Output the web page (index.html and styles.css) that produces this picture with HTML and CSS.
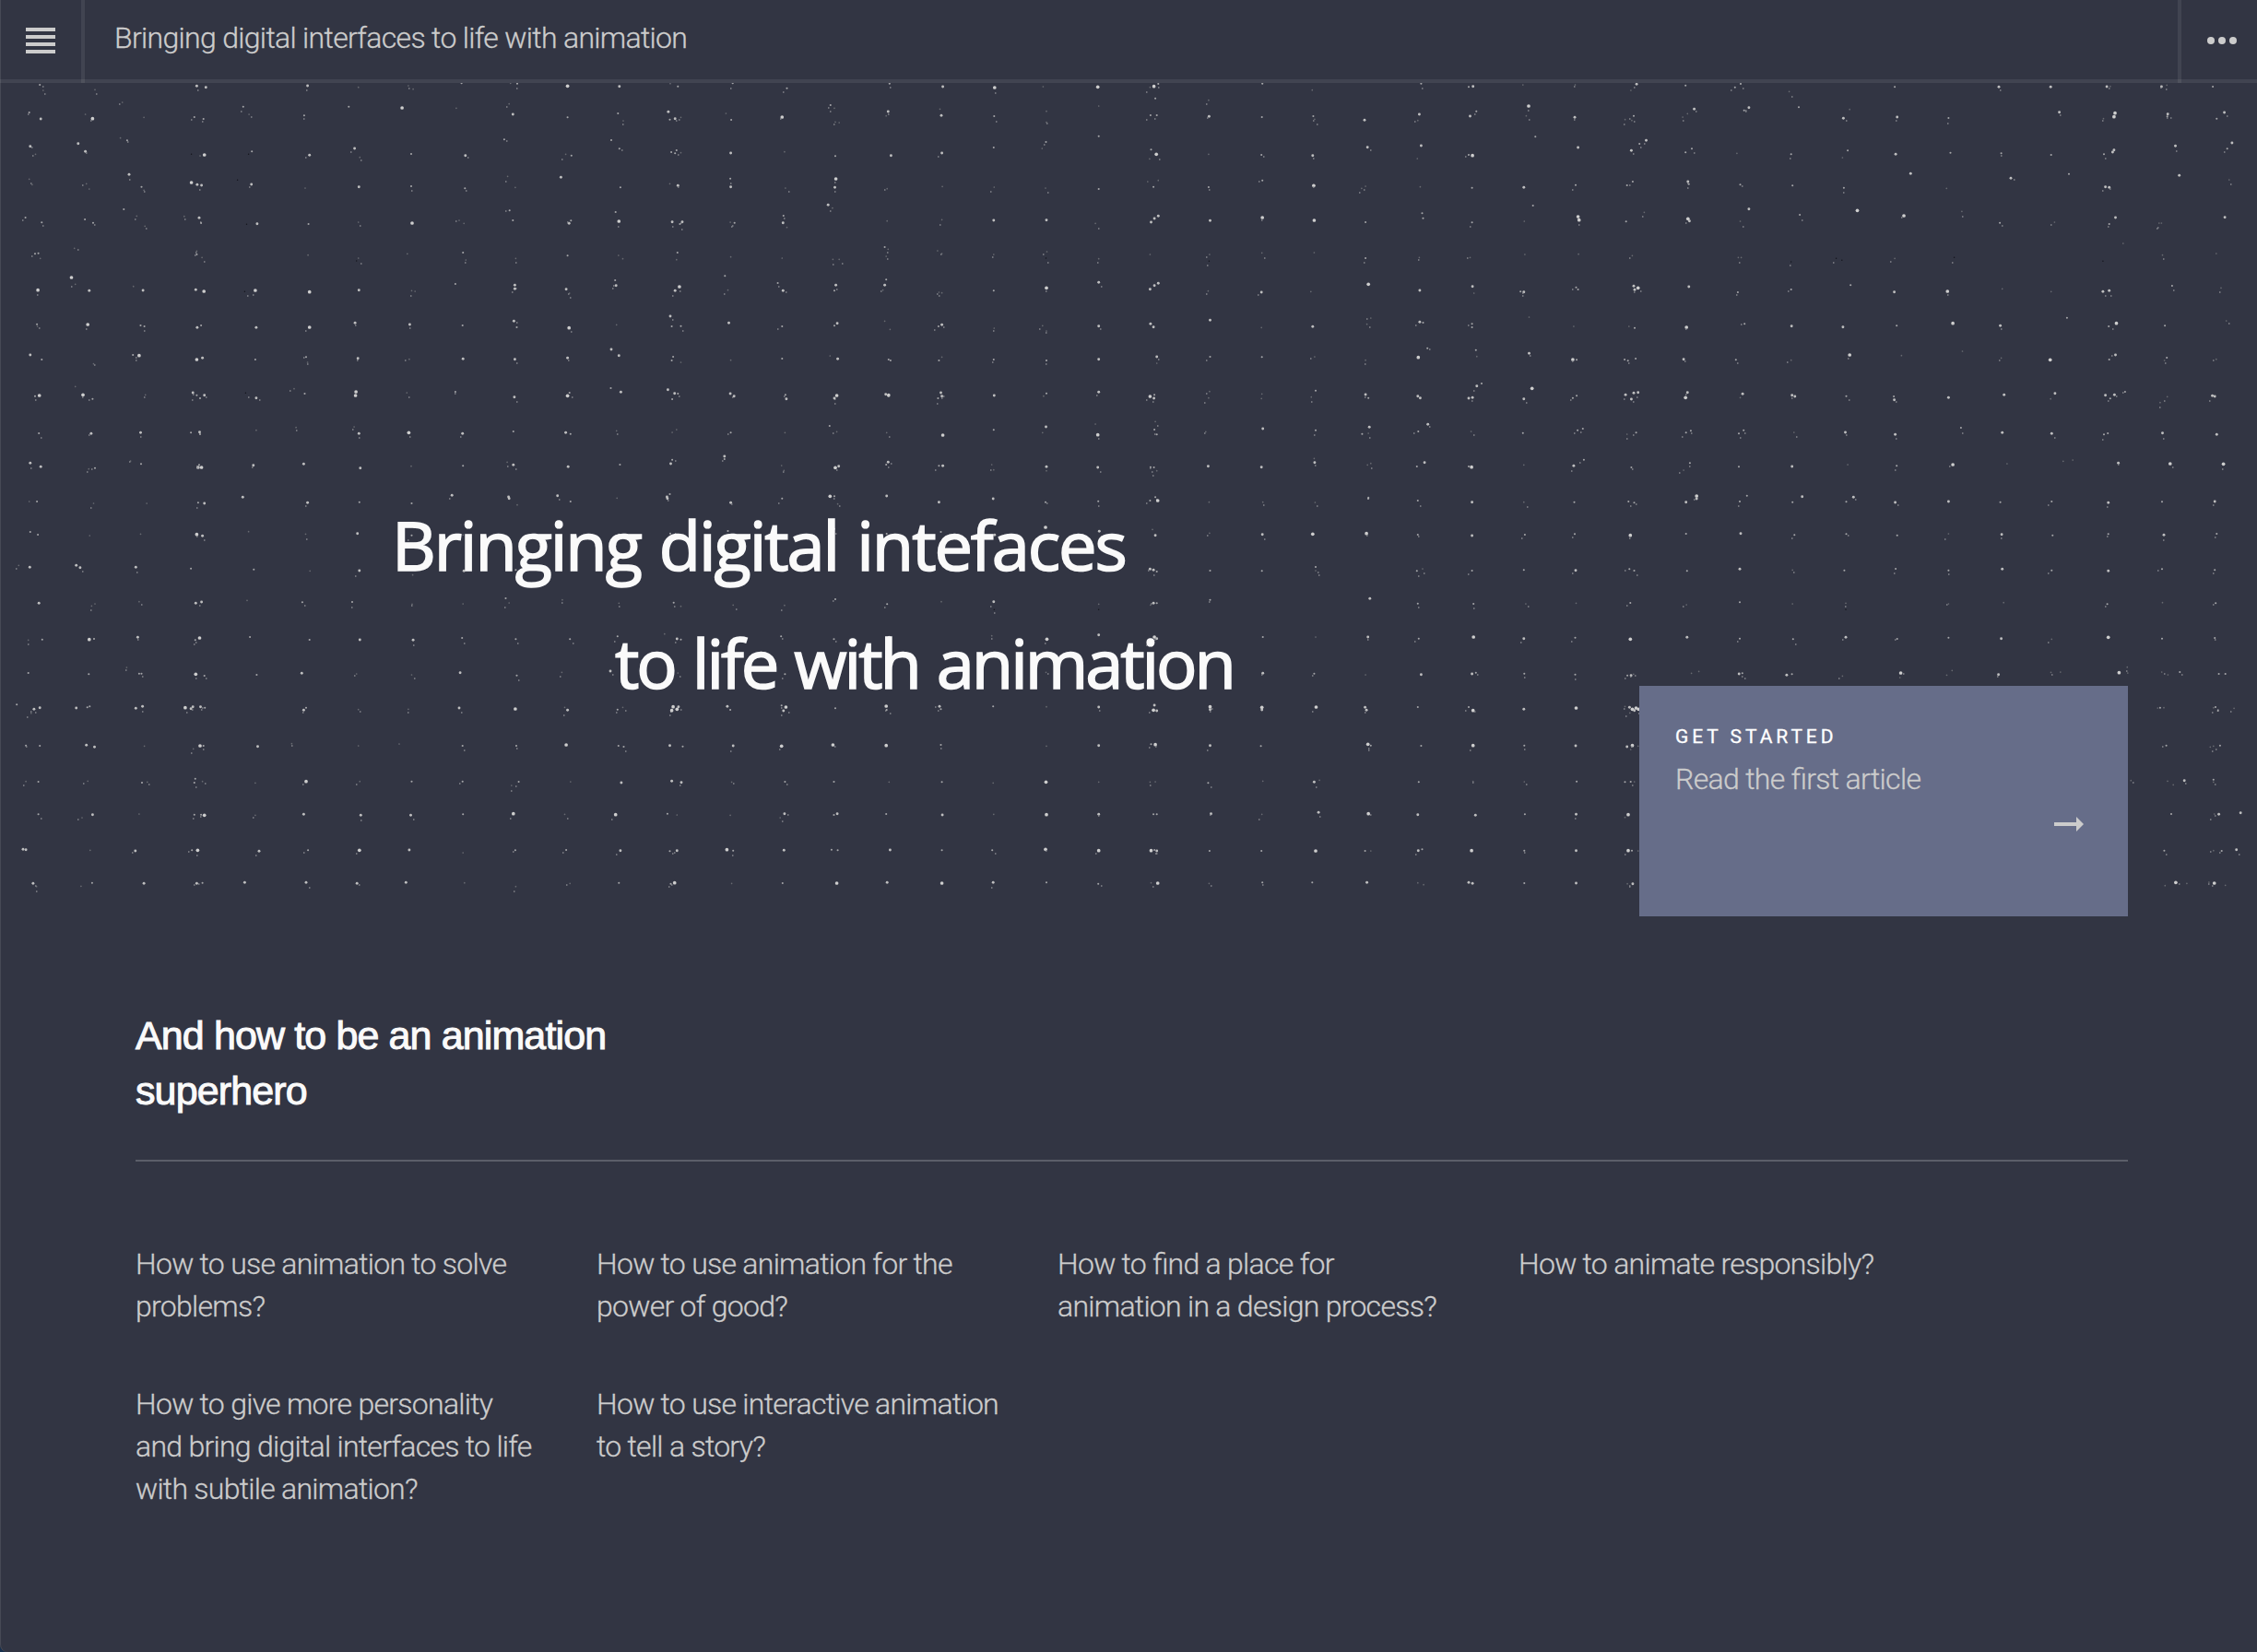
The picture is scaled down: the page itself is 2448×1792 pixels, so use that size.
FILE: index.html
```
<!DOCTYPE html>
<html lang="en">
<head>
<meta charset="utf-8">
<title>Bringing digital interfaces to life with animation</title>
<link rel="stylesheet" href="styles.css">
</head>
<body>
<div class="page">
  <header class="topbar">
    <button class="topbar-button menu" aria-label="Menu">
      <svg width="32" height="28" viewBox="0 0 32 28"><path d="M0 0h32v4H0zM0 8h32v4H0zM0 16h32v4H0zM0 24h32v4H0z"/></svg>
    </button>
    <div class="topbar-title">Bringing digital interfaces to life with animation</div>
    <button class="topbar-button more" aria-label="More">
      <svg width="32" height="8" viewBox="0 0 32 8"><circle cx="4" cy="4" r="4"/><circle cx="16" cy="4" r="4"/><circle cx="28" cy="4" r="4"/></svg>
    </button>
  </header>
  <section class="hero">
    <svg class="stars" id="stars" width="2448" height="904" viewBox="0 90 2448 904"></svg>
    <h1 class="hero-title"><span>Bringing digital intefaces</span><span class="indent">to life with animation</span></h1>
    <a class="card">
      <span class="card-label">GET STARTED</span>
      <span class="card-text">Read the first article</span>
      <svg class="card-arrow" width="32" height="16" viewBox="0 0 32 16"><path d="M0 6h24V0l8 8-8 8v-6H0z"/></svg>
    </a>
  </section>
  <main class="content">
    <h2 class="subtitle">And how to be an animation superhero</h2>
    <ul class="articles">
      <li>How to use animation to solve problems?</li>
      <li>How to use animation for the power of good?</li>
      <li>How to find a place for animation in a design process?</li>
      <li>How to animate responsibly?</li>
      <li>How to give more personality and bring digital interfaces to life with subtile animation?</li>
      <li>How to use interactive animation to tell a story?</li>
    </ul>
  </main>
</div>
<script src="stars.js"></script>
</body>
</html>
```
FILE: styles.css
```
* { box-sizing: border-box; }
body {
  margin: 0;
  background: #17304f;
  font-family: Roboto, "Liberation Sans", sans-serif;
  font-weight: 300;
  font-size: 32px;
  line-height: 46px;
  letter-spacing: -.68px;
  font-feature-settings: "liga" 1;
  -webkit-text-stroke: .3px;
  color: #ccc;
}
.page {
  width: 2448px;
  height: 1792px;
  overflow: hidden;
  background: #323543;
  box-shadow: inset 1px 0 #464955;
  border-bottom-left-radius: 8px;
}
.topbar {
  display: flex;
  height: 90px;
  border-bottom: 4px solid rgba(204, 204, 204, .1);
}
.topbar-button {
  display: flex;
  align-items: center;
  height: 90px;
  margin: 0;
  padding: 0 0 2px;
  border: 0 solid rgba(204, 204, 204, .1);
  background: none;
}
.topbar svg, .card svg { display: block; fill: #ccc; }
.menu { width: 92px; padding-left: 28px; border-right-width: 4px; }
.more { width: 86px; padding-left: 28px; border-left-width: 4px; }
.topbar-title { flex: 1; padding: 18px 0 0 32px; }
.hero {
  position: relative;
  display: flex;
  justify-content: space-between;
  height: 904px;
  padding: 0 140px 0 425px;
}
.stars { position: absolute; left: 0; top: 0; }
.hero-title {
  position: relative;
  display: flex;
  flex-direction: column;
  margin: 437px 0 0;
  font: 500 74px/128px "Open Sans", sans-serif;
  letter-spacing: -2.1px;
  word-spacing: 3px;
  -webkit-text-stroke: 1.6px #fafafa;
  color: #fafafa;
  white-space: nowrap;
}
.indent { padding-left: 242px; letter-spacing: -3.1px; }
.card {
  position: relative;
  align-self: flex-end;
  display: flex;
  flex-direction: column;
  width: 530px;
  height: 250px;
  padding: 32px 48px 0 39px;
  background: #666d89;
}
.card-label {
  font-size: 21px;
  line-height: 46px;
  font-weight: 400;
  letter-spacing: 3.95px;
  color: #fff;
}
.card-arrow { align-self: flex-end; margin-top: 18px; }
.content { padding: 99px 140px 0 147px; }
.subtitle {
  margin: 0;
  padding: 0 1600px 45px 0;
  border-bottom: 2px solid #5b5e69;
  font: 400 43px/60px "Liberation Sans", sans-serif;
  letter-spacing: -.88px;
  -webkit-text-stroke: 1px #fafafa;
  color: #fafafa;
}
.articles {
  display: grid;
  grid-template-columns: repeat(4, 440px);
  gap: 60px;
  margin: 88px 0 0;
  padding: 0;
  list-style: none;
  letter-spacing: -.73px;
}
```
FILE: stars.js
```
// Star positions by sky tile: x,y,magnitude in tile units.
const SX = 816 / 1568, SY = 1 / 3;
const tiles = [
  [0, 80, SX, `83,36,2 90,54,1 198,52,1 410,40,3 429,44,3 641,39,3 747,44,1 851,39,1 861,50,1 962,31,2 1078,32,2 1064,31,1 1183,40,4 1291,41,3 1397,32,1 1413,41,2 1527,31,2 255,93,1 507,107,2 727,107,2 838,111,4 951,112,1 1061,98,1
  61,126,2 85,147,3 193,146,4 178,132,1 300,142,1 405,141,2 424,147,2 634,136,2 519,132,1 1069,132,3 1183,142,2 1288,129,2 1299,153,1 1393,124,3 1407,146,3 1396,149,2 1419,142,1 1524,150,2 1513,129,1
  63,236,3 74,262,1 163,227,3 178,253,3 265,217,2 251,209,1 399,262,0 426,264,4 417,267,1 525,253,2 518,262,0 645,265,3 739,243,3 750,272,1 857,261,2 970,266,3 1051,214,2 1179,262,1 1191,266,2 1274,216,2 1291,244,2 1399,255,2 1410,249,2 1407,259,2 1419,257,1 1523,258,3
  61,343,1 67,361,1 180,358,1 186,375,1 269,328,3 295,368,2 300,379,1 399,354,4 411,361,3 420,363,3 495,346,0 524,360,3 636,372,1 748,368,3 857,366,2 969,373,2 1058,334,1 1074,370,1 1169,337,3 1293,370,2 1396,358,1 1413,364,3 1522,341,2 1523,368,3
  53,468,2 87,484,2 177,474,2 194,485,2 258,441,2 285,463,1 302,496,1 384,464,1 415,469,3 419,486,2 514,490,0 536,488,3 643,489,2 747,483,1 859,486,4 967,487,1 957,477,1 1062,445,2 1069,477,2 1186,487,3 1190,478,2 1283,450,2 1290,480,4 1401,482,3 1422,482,3 1417,489,2 1522,483,1 1531,485,2
  73,586,2 80,584,2 84,601,1 155,568,1 410,588,2 410,577,1 421,598,1 642,590,1 747,600,1 743,609,0 849,586,1 965,582,2 971,606,1 1075,601,1 1183,592,2 1289,591,1 1298,602,1 1412,582,2 1410,605,1 1523,596,1
  79,704,4 149,663,4 157,685,1 186,706,3 298,705,3 278,692,1 408,703,3 425,708,4 532,705,4 510,709,0 645,710,4 748,704,3 858,706,1 865,708,1 949,684,2 1073,688,3 1073,700,3 1180,701,3 1187,714,1 1282,672,2 1284,689,3 1416,693,4 1407,706,3 1511,658,2 1517,704,1
  77,815,2 78,822,1 183,816,4 293,819,2 301,822,2 411,826,3 419,819,2 534,826,3 645,825,4 740,811,3 854,816,3 964,819,2 1071,805,3 1077,825,2 1186,827,4 1285,817,1 1397,789,3 1400,822,2 1419,821,2 1519,811,3
  63,915,3 87,930,2 195,944,1 277,915,2 290,917,4 410,930,4 422,925,3 532,930,2 638,922,2 641,939,1 746,926,3 853,929,1 965,928,3 1073,929,3 1183,925,3 1274,897,3 1290,917,3 1403,921,2 1400,933,2 1419,939,1 1523,932,1
  73,1049,2 82,1047,4 157,1018,1 173,1045,4 193,1058,2 303,1045,1 402,1038,3 410,1046,2 417,1056,2 426,1046,3 512,1039,0 534,1055,3 635,1041,2 613,1025,1 742,1035,4 741,1047,4 848,1038,1 949,1035,2 1072,1052,3 1183,1048,4 1187,1038,2 1273,1023,2 1294,1036,3 1392,1028,3 1406,1040,3 1413,1041,2 1401,1059,2 1522,1041,3 1530,1049,3
  81,1170,2 190,1171,3 293,1168,3 398,1168,2 416,1166,3 417,1173,2 534,1160,1 617,1151,1 748,1171,3 738,1149,1 852,1168,4 964,1171,3 1070,1164,2 1179,1168,3 1189,1172,2 1285,1162,1 1410,1158,1 1401,1167,1 1523,1168,2
  63,1267,3 85,1279,3 185,1286,1 198,1283,2 272,1260,1 294,1270,2 413,1281,4 420,1281,4 415,1273,2 528,1274,3 633,1270,3 751,1283,3 857,1277,1 965,1276,2 1070,1273,3 1057,1264,1 1184,1279,3 1292,1272,2 1398,1269,3 1401,1256,2 1510,1245,3 1510,1254,2 506,1378,3 942,1372,3 1060,1377,3 1162,1373,3 1396,1368,2 1390,1377,3`],
  [816, 80, SX, `72,47,2 286,32,2 397,42,3 505,45,4 606,42,1 720,43,4 837,41,4 846,33,2 829,44,1 1063,32,2 1167,53,1 1394,32,2 1493,43,2 1502,41,3 163,102,2 171,112,1 722,105,1 840,80,2 951,86,1
  62,141,4 173,157,1 181,159,1 283,123,3 279,137,1 394,136,3 391,115,1 504,138,2 613,122,1 613,158,1 830,135,2 843,135,2 952,139,3 1062,141,2 1169,138,2 1172,148,1 1276,151,3 1390,132,3 1387,152,1 1496,138,3 1509,122,2
  67,254,1 173,268,2 289,266,3 395,258,3 503,240,2 612,222,2 604,243,1 722,203,2 831,247,2 842,262,4 828,277,1 951,262,1 1061,264,2 1168,266,3 1282,239,3 1394,234,3 1386,276,1 1493,264,2 1501,266,4
  69,372,1 174,342,4 172,370,3 281,374,1 396,367,1 504,369,1 611,372,1 722,375,2 824,351,1 836,368,2 846,347,1 951,369,2 1063,347,2 1170,364,4 1278,366,1 1270,373,1 1392,368,1 1500,371,2
  158,427,3 167,437,1 65,462,2 64,485,3 72,500,1 281,479,1 395,475,1 503,477,3 613,476,3 715,487,1 831,483,3 838,471,3 846,463,3 954,478,3 1063,468,4 1171,477,4 1278,483,2 1396,454,2 1398,470,2 1500,484,2
  62,600,1 168,604,1 181,604,1 276,564,2 283,571,1 279,594,1 386,576,1 395,585,1 503,588,1 614,579,1 612,600,0 722,602,1 829,588,1 953,588,1 952,610,0 1062,583,1 1171,582,1 1278,600,2 1390,598,1 1496,598,1
  53,681,2 64,706,3 174,688,3 171,706,2 276,688,3 279,670,2 272,704,1 389,711,1 395,713,1 503,706,2 613,697,4 722,679,3 846,682,3 838,689,3 829,701,3 950,707,1 1061,711,3 1164,709,1 1284,685,4 1391,705,3 1501,692,3 1504,714,1
  62,822,2 177,812,3 171,820,2 276,805,1 287,832,1 395,817,3 388,822,2 504,828,1 605,820,1 613,837,1 722,821,3 830,814,3 836,824,3 954,802,3 1061,826,1 1168,823,3 1281,815,1 1289,795,1 1391,808,3 1398,810,2 1500,814,2 1500,825,2
  62,927,2 162,918,1 178,928,3 284,930,2 288,933,2 395,922,1 389,933,2 503,930,2 613,933,2 722,929,3 843,921,3 843,942,1 954,921,2 1062,922,2 1172,921,1 1278,932,1 1388,923,4 1407,893,2 1508,899,2 1510,920,1
  69,1045,2 71,1058,3 176,1047,4 171,1056,3 278,1043,3 284,1046,4 393,1038,3 395,1049,3 387,1056,2 504,1047,3 613,1040,2 607,1049,1 722,1036,3 829,1050,4 837,1056,3 838,1045,2 953,1034,1 951,1055,1 1062,1042,1 1061,1057,1 1174,1031,2 1165,1052,1 1278,1044,3 1284,1055,2 1387,1049,3 1392,1055,3 1510,1016,3 1520,1008,2 1493,1056,3 1501,1054,3
  68,1168,1 161,1146,2 176,1165,1 280,1168,1 397,1176,4 503,1159,2 612,1149,3 605,1168,1 720,1175,4 715,1140,1 838,1158,2 843,1174,2 840,1132,1 945,1165,1 1064,1155,3 1174,1160,2 1286,1150,3 1271,1172,2 1284,1170,1 1408,1141,3 1388,1164,2 1498,1164,1
  61,1275,1 66,1291,1 173,1282,4 180,1277,3 283,1264,3 279,1272,2 397,1276,3 389,1276,2 499,1272,1 503,1289,1 613,1279,3 613,1292,1 720,1281,3 830,1280,2 837,1281,2 843,1292,1 950,1277,3 1061,1280,3 1172,1265,3 1171,1252,1 1282,1273,1 1289,1268,1 1401,1265,3 1385,1278,2 1499,1280,4 1493,1278,2 162,1375,4 171,1375,2 280,1374,3 840,1378,2 1284,1379,2`],
  [1632, 80, SX, `38,36,1 147,36,1 275,34,3 263,54,1 377,38,2 480,44,2 492,33,2 593,58,1 813,43,2 1030,43,3 1138,43,3 1255,42,3 1262,41,1 1369,42,3 1380,37,1 1476,42,2
  50,105,4 45,137,1 146,142,3 269,137,2 251,149,1 265,152,1 395,115,3 381,130,1 371,141,1 509,110,3 499,119,2 613,109,2 706,145,3 719,116,1 818,141,3 925,144,2 1156,125,3 1272,128,4 1270,140,4 1248,146,1 1382,131,3 1381,139,2 1500,126,3 1484,146,2
  64,205,2 153,240,3 295,217,3 281,228,2 264,250,3 377,256,2 390,244,2 484,259,1 597,262,2 715,250,2 704,273,1 815,262,3 929,257,2 1035,259,2 1139,264,2 1270,248,3 1267,255,3 1249,262,2 1398,235,3 1516,225,3 1506,244,2
  40,370,3 148,362,2 267,351,2 255,363,2 382,351,3 384,359,2 491,361,2 600,364,2 707,371,2 846,325,3 921,373,1 1055,340,3 1176,326,2 1252,368,3 1260,370,3 1406,331,3 1510,345,1
  59,429,2 41,480,1 153,465,4 155,476,4 253,481,2 291,451,1 382,472,4 385,479,3 509,440,3 491,480,1 615,459,2 735,445,4 832,462,4 953,448,1 1032,485,2 1146,483,1 1273,468,3 1260,489,2 1364,486,1 1369,486,1 1501,467,3
  42,588,1 154,587,1 266,592,1 487,598,1 493,598,1 597,612,0 691,601,0 703,607,0 813,601,1 937,598,0 1247,610,0 1289,552,1 1371,590,1 1483,585,1
  40,710,3 33,709,2 149,695,2 153,702,2 269,691,3 278,697,4 271,703,3 384,693,3 486,711,2 597,702,2 721,688,2 812,710,3 923,708,4 1037,700,1 1139,709,1 1247,709,3 1260,706,3 1391,690,2 1493,697,1
  51,792,1 144,822,1 259,822,1 271,827,2 379,825,4 500,814,2 598,821,3 705,824,3 817,820,2 934,812,4 1033,820,3 1172,794,2 1275,812,4 1259,822,2 1376,820,2 1504,804,1
  51,910,3 142,930,4 150,931,2 257,934,2 250,930,2 273,927,2 373,929,3 482,931,2 597,932,1 719,915,4 827,917,1 954,903,1 1035,925,1 1137,931,4 1273,915,3 1260,930,2 1380,924,2 1375,933,1 1483,929,1
  57,1024,4 40,1058,3 150,1048,2 142,1055,2 278,1037,3 252,1045,3 269,1039,3 264,1059,3 381,1037,3 377,1054,4 496,1042,3 491,1054,1 599,1046,3 605,1050,3 712,1049,2 811,1050,2 812,1061,3 925,1054,3 1041,1045,3 1147,1040,3 1138,1058,1 1252,1046,3 1271,1045,3 1262,1057,2 1293,1035,2 1381,1051,1 1366,1070,1 1475,1048,3 1480,1050,3
  38,1169,2 152,1160,2 163,1155,2 274,1168,2 255,1173,1 378,1168,2 388,1162,2 488,1171,2 498,1160,2 603,1167,1 710,1167,3 814,1174,3 951,1152,2 1037,1168,3 1140,1171,3 1257,1170,2 1249,1174,2 1371,1169,3 1484,1174,3
  40,1273,1 144,1276,3 165,1256,2 264,1281,2 386,1267,2 373,1290,1 488,1279,2 599,1278,3 715,1272,1 817,1276,2 934,1272,4 1047,1269,1 1164,1261,1 1184,1257,1 1279,1267,3 1387,1269,4 1498,1270,4 400,1374,4 505,1373,2 620,1376,3 727,1378,3`],
  [0, 540, SX, `61,12,1 77,12,2 195,18,1 306,18,1 413,16,2 426,18,3 641,16,3 749,14,2 858,18,2 1061,2,3 1078,23,1 1189,12,2 1286,1,1 1391,2,3 1523,16,3
  63,111,2 79,120,2 187,123,1 293,118,1 410,119,4 422,124,3 518,110,1 637,118,1 745,116,3 858,122,2 965,121,1 1290,119,2 1397,116,2 1408,118,2 1517,108,2
  39,220,1 62,226,3 159,220,3 167,227,3 283,226,3 398,230,2 529,233,2 646,238,1 749,237,3 967,238,3 1075,235,2 860,251,1
  81,343,3 191,352,1 198,345,1 290,338,1 408,343,3 420,339,3 515,334,1 630,340,2 734,339,2 859,346,1 965,345,1 1054,327,2 1061,342,1 1172,332,1 1290,343,1 1404,341,2 1419,353,1 1528,349,1
  59,463,1 88,461,2 186,461,4 196,459,2 287,454,3 416,456,4 407,463,2 521,453,2 645,462,2 750,462,3 861,463,3 963,456,2 1075,460,2 1188,460,2 1287,451,2 1385,443,1 1411,459,3 1419,461,2
  59,570,2 185,574,2 264,552,1 290,572,2 295,572,2 408,574,4 426,579,2 535,576,2 629,571,3 743,573,1 858,576,1 959,569,3 1077,578,2 1171,568,1 1272,564,3 1413,570,1
  35,673,2 71,688,3 83,683,3 65,701,1 159,684,3 182,682,2 187,679,2 283,685,3 297,679,3 386,683,4 398,686,3 402,680,3 418,680,3 427,683,2 633,691,3 638,683,2 747,689,1 851,688,1 957,684,3 1074,687,4 1183,691,3 1177,682,1 1287,689,2 1298,682,1 1403,680,4 1411,688,4 1400,692,4 1414,680,3 1516,679,3 1522,690,2
  54,806,2 83,807,2 180,805,3 197,811,3 301,808,1 417,807,4 424,807,2 403,817,1 537,809,3 608,800,1 747,807,1 832,801,1 964,807,2 1076,807,2 1180,804,4 1289,807,2 1300,810,2 1396,806,3 1423,809,2 1528,807,3
  54,923,1 80,924,2 183,922,1 296,927,2 307,925,1 407,914,2 405,927,2 422,923,1 532,928,1 638,923,4 750,923,1 858,923,2 964,923,2 1081,924,2 1066,936,1 1189,924,1 1295,927,3 1400,922,3 1420,926,3 1525,925,1
  80,1030,2 193,1031,3 171,1041,1 290,1029,1 405,1031,2 426,1033,4 419,1031,2 532,1033,1 633,1030,3 752,1033,3 856,1033,3 965,1030,2 1070,1028,4 1177,1030,1 1283,1031,4 1391,1028,2 1411,1032,1 1522,1033,1
  48,1144,3 54,1145,3 188,1147,1 282,1149,3 412,1147,4 400,1147,2 540,1150,3 642,1147,2 749,1147,4 853,1146,3 965,1155,1 1074,1147,2 1180,1146,2 1293,1148,3 1411,1148,3 1396,1150,2 1515,1145,4 1528,1148,2
  69,1255,3 76,1265,1 192,1253,2 169,1264,1 300,1255,3 410,1255,3 422,1253,2 510,1252,3 638,1252,3 744,1255,3 846,1252,3 968,1253,1 1075,1265,1 1188,1255,1 1290,1253,2 1406,1253,4 1398,1256,2 1525,1255,1`],
  [816, 540, SX, `62,2,2 178,20,1 389,14,3 502,3,3 611,14,2 721,11,2 845,9,4 829,9,2 952,14,1 1064,14,1 1173,15,1 1284,2,2 1387,9,2 1500,14,3
  171,101,2 280,117,2 393,111,2 505,121,3 611,96,4 723,109,3 834,103,1 840,122,3 953,115,1 1063,119,3 1168,118,4 1280,116,4 1387,120,2 1500,123,3
  829,232,3 836,235,3 843,240,2 954,237,2 1062,238,2 1174,225,2 1174,237,1 1385,238,2 1397,231,1 1500,237,2
  67,350,1 173,330,2 281,346,2 394,338,1 503,338,3 722,346,1 836,343,3 843,343,2 830,349,1 954,332,2 1287,328,3 1387,344,2 1503,345,2 504,364,0 722,364,0
  60,451,2 170,460,2 285,455,4 499,449,1 614,460,4 722,446,3 838,453,4 843,458,3 828,463,2 1064,453,2 1174,453,1 1283,453,3 1389,458,2 1503,453,4
  68,574,2 284,569,3 397,574,3 612,568,1 1064,571,3 1171,572,2 1278,576,1 1394,575,3 1500,573,3 1508,569,2
  61,676,2 70,681,4 65,693,3 173,685,2 279,678,4 280,690,2 390,679,3 393,688,2 502,679,2 613,680,1 722,681,3 838,675,3 836,691,4 843,693,3 954,680,4 954,689,3 1062,682,4 1062,690,3 1175,681,4 1277,682,3 1280,691,3 1387,681,2 1493,681,2 1502,692,4
  61,808,4 168,804,4 279,806,4 393,804,2 613,808,1 722,806,3 831,802,2 840,803,4 954,806,3 1060,808,2 1283,802,4 1289,806,2 1394,807,2 1502,806,4
  68,924,2 170,924,2 285,925,1 395,925,2 502,928,1 612,925,4 722,925,1 829,925,1 840,924,1 950,928,2 1064,922,1 1171,925,3 1182,919,1 1389,925,2 1502,923,1
  67,1028,3 58,1041,1 177,1028,3 170,1032,2 279,1029,2 396,1032,3 503,1030,1 613,1031,4 722,1030,3 836,1030,2 843,1030,2 956,1028,3 1062,1030,1 1180,1024,3 1284,1028,4 1387,1031,3 1507,1033,3
  66,1147,3 165,1145,2 178,1147,2 287,1146,3 395,1147,2 500,1147,2 611,1144,4 722,1148,4 831,1148,4 843,1149,3 838,1146,2 953,1149,2 1061,1149,2 1174,1149,4 1277,1149,2 1289,1149,1 1388,1148,3 1396,1144,2 1499,1148,4
  63,1254,2 176,1254,4 281,1252,3 395,1254,4 502,1252,3 613,1252,2 721,1256,2 845,1254,4 831,1253,1 952,1255,1 1063,1252,2 1167,1252,2 1281,1252,3 1387,1253,1 1399,1259,1 1493,1252,3 1501,1255,3`],
  [1632, 540, SX, `40,14,1 145,14,2 258,12,2 270,16,2 378,14,3 400,3,3 490,12,2 600,14,2 712,13,2 814,15,3 925,12,3 1033,14,2 1140,12,2 1258,16,3 1370,13,2 1480,12,3
  42,120,2 146,118,2 262,122,4 378,117,2 492,116,3 604,121,2 712,118,2 818,122,2 925,117,1 1036,119,3 1142,122,2 1258,118,2 1374,121,3 1484,117,2
  40,235,2 148,236,3 260,232,2 270,237,2 380,238,2 490,232,3 600,235,1 708,236,2 815,231,2 925,236,2 1037,232,3 1140,236,2 1258,238,3 1370,232,2 1480,235,2
  44,345,1 149,343,1 262,342,2 379,348,1 490,340,2 600,345,1 711,343,1 711,364,0 925,345,1 1040,341,1 1256,346,2 1371,341,1 1482,343,2
  40,458,3 147,455,2 262,460,4 380,454,3 490,458,2 601,460,2 711,454,3 818,459,2 925,455,2 1035,458,3 1140,460,1 1258,454,4 1370,458,2 1480,456,2
  41,572,2 147,575,2 40,688,3 149,684,4 41,806,2 148,807,3 41,924,1 150,923,2 42,1030,2 149,1030,3 41,1148,2 149,1148,3 41,1254,2 149,1254,3`],
  [1750, 720, 698 / 1568, `34,38,2 43,38,3 49,34,1 190,31,1 208,25,1 306,33,3 314,31,2 422,37,3 435,34,2 558,40,1 700,30,4 698,45,1 812,37,1 825,22,1 938,35,3 1066,28,1 1089,27,1 1232,29,4 1253,30,1 1252,11,1 1336,27,1 1351,36,1 1380,27,2 1475,33,2 1491,33,2
  28,139,1 39,142,3 46,148,4 55,144,4 51,152,3 61,148,4 40,160,1 1326,144,1 1332,143,2 1341,143,1 1462,143,1 1467,141,2 1473,153,2 1512,145,1
  33,270,3 46,266,4 60,268,1 42,279,1 1347,266,2 1462,268,1 1478,266,2 1454,271,1
  28,385,2 42,384,2 51,384,1 1261,380,1 1350,382,1 1391,380,3 1462,377,2 1462,385,1 1364,394,1
  36,491,4 28,500,1 1359,489,2 1464,489,1 1475,490,3 1528,485,3
  36,608,4 45,608,2 60,609,1 1342,608,2 1462,608,1 1482,609,2 1518,605,3
  47,716,3 34,716,1 1344,722,1 1370,712,4 1397,715,1 1451,711,1 1464,714,4 1491,721,1`]
];
const look = [['#14151c', .7, 1], ['#85878b', .85, .65], ['#b9b9ba', 1.05, .85], ['#c6c6c6', 1.45, .95], ['#cecece', 1.85, 1]];
let seed = 7;
const random = () => (seed = (seed * 16807) % 2147483647) / 2147483647;
const dot = (x, y, m) => `<circle cx="${x.toFixed(1)}" cy="${y.toFixed(1)}" r="${look[m][1]}" fill="${look[m][0]}" opacity="${look[m][2]}"/>`;
let out = '';
for (const [ox, oy, sx, list] of tiles) {
  for (const item of list.trim().split(/\s+/)) {
    const [x, y, m] = item.split(',').map(Number);
    const px = ox + x * sx, py = oy + y * SY;
    out += dot(px, py, m);
    // faint trail beside some stars
    if (random() < .55) out += `<rect x="${Math.round(px - 5 + random() * 8)}" y="${Math.round(py + random() * 5)}" width="1.5" height="2" fill="#8a8c92" opacity=".7"/>`;
  }
}
document.getElementById('stars').innerHTML = out;
```
